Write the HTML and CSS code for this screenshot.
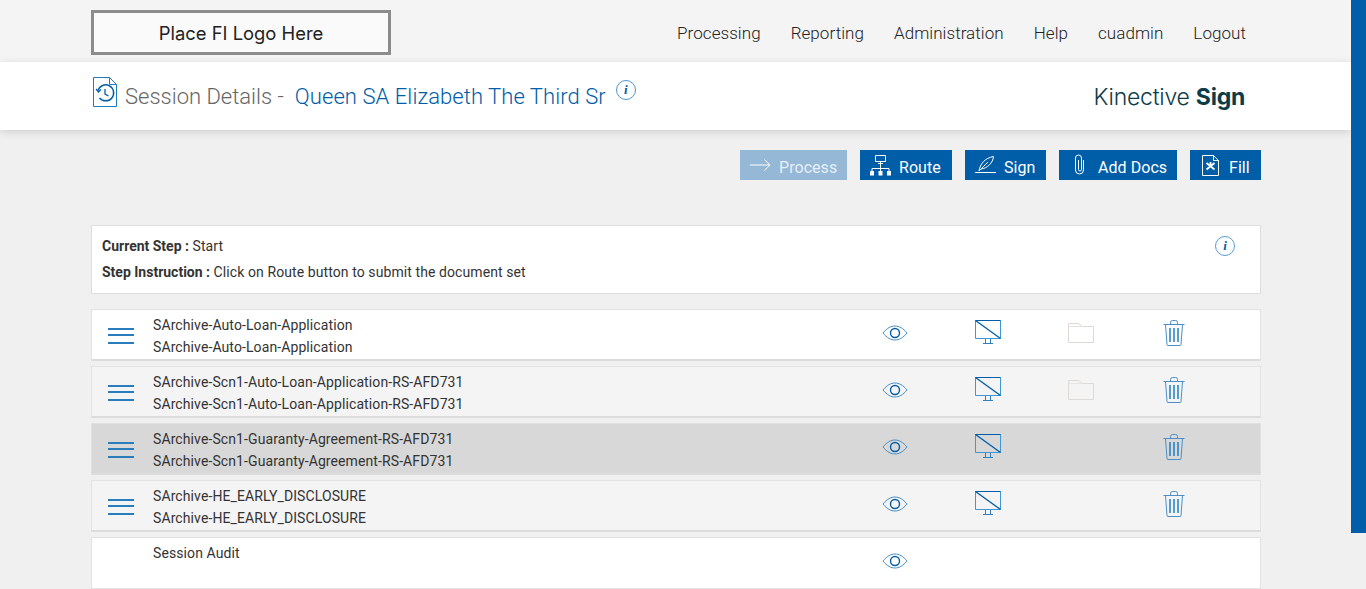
FILE: index.html
```html
<!DOCTYPE html>
<html lang="en">
<head>
<meta charset="utf-8">
<title>Session Details</title>
<link rel="stylesheet" href="styles.css">
</head>
<body>
<svg class="defs" width="0" height="0" aria-hidden="true">
  <symbol id="i-eye" viewBox="0 0 26 16"><path d="M1 8C5 3 9 1 13 1s8 2 12 7c-4 5-8 7-12 7S5 13 1 8z" fill="none" stroke="#4b8fc6" stroke-width="1"/><circle cx="13" cy="8" r="4.5" fill="none" stroke="#005da8" stroke-width="1.4"/></symbol>
  <symbol id="i-mon" viewBox="0 0 26 24"><path d="M.5 .5h25v18H.5z" fill="none" stroke="#3f97d3" stroke-width="1"/><path d="M.5 .5L25.5 18.5" stroke="#005da8" stroke-width="1.3"/><path d="M.5 .5h25" stroke="#005da8" stroke-width="1"/><path d="M10.5 19v4M15.5 19v4M8 23.500h10" stroke="#2f80bd" stroke-width="1" fill="none"/></symbol>
  <symbol id="i-folder" viewBox="0 0 26 20"><path d="M.5 19.500V.5h10l4 3h11v16z" fill="none" stroke="#dcd9d6" stroke-width="1"/><path d="M.5 3.500h14" stroke="#e6e3e0" stroke-width="1"/></symbol>
  <symbol id="i-trash" viewBox="0 0 22 26"><path d="M.5 4.500h21M7.500 4.500V2.500q0-2 2-2h3q2 0 2 2v2" fill="none" stroke="#4b8fc6" stroke-width="1"/><path d="M2.500 4.500l1.500 20q0 1 1 1h12q1 0 1-1l1.500-20" fill="none" stroke="#4b8fc6" stroke-width="1"/><path d="M7 8v14M11 8v14M15 8v14" stroke="#0f78c4" stroke-width="1.400"/></symbol>
</svg>

<header class="topbar">
  <div class="container topbar-in">
    <div class="logo">Place FI Logo Here</div>
    <nav class="nav">
      <a>Processing</a><a>Reporting</a><a>Administration</a><a>Help</a><a>cuadmin</a><a>Logout</a>
    </nav>
  </div>
</header>

<section class="titlebar">
  <div class="container titlebar-in">
    <div class="title">
      <svg class="title-icon" viewBox="0 0 24 30" width="24" height="30"><path d="M.5 .5h16l7 7v22H.5z" fill="none" stroke="#1c7cc2" stroke-width="1"/><path d="M16.500 .5v7h7" fill="none" stroke="#1c7cc2" stroke-width="1"/><path d="M5 13.500A8 8 0 1 1 6.500 21" fill="none" stroke="#005da8" stroke-width="1.500"/><path d="M3 12l2.500 3 2.500-2.500" fill="none" stroke="#005da8" stroke-width="1.200"/><path d="M12 12v5l3.500 2" fill="none" stroke="#005da8" stroke-width="1.300"/></svg>
      <span class="title-label">Session Details -</span>
      <span class="title-name">Queen SA Elizabeth The Third Sr</span>
      <span class="info info-title">i</span>
    </div>
    <div class="brand">Kinective <b>Sign</b></div>
  </div>
</section>

<main class="container">
  <div class="actions">
    <a class="btn btn-off"><svg width="21" height="12" viewBox="0 0 21 12"><path d="M0 6h20M14.500 .5L20 6l-5.500 5.500" fill="none" stroke="#fff" stroke-width="1"/></svg><span class="btn-label">Process</span></a>
    <a class="btn btn-route"><svg width="21" height="21" viewBox="0 0 21 21"><path d="M5.500 .5h10v6h-10zM8 8.500h5M10.500 7v9M2 16v-2.500h17V16" fill="none" stroke="#fff" stroke-width="1"/><path d="M0 16h4v4.500H0zM8.500 16h4v4.500h-4zM17 16h4v4.500h-4z" fill="#fff"/></svg><span class="btn-label">Route</span></a>
    <a class="btn btn-sign"><svg class="ic-sign" width="21" height="17" viewBox="0 0 21 17"><path d="M0 16.500h21" stroke="#fff" stroke-width="1"/><path d="M4 15C5 8 10 2 18.500 .5 18 7 12 12.500 6 13L4 15zM6 13L13 6" fill="none" stroke="#fff" stroke-width="1"/></svg><span class="btn-label">Sign</span></a>
    <a class="btn btn-docs"><svg class="ic-clip" width="9" height="21" viewBox="0 0 9 21"><path d="M3.500 6V15.500a1.500 1.500 0 0 0 3 0V4a3 3 0 0 0-6 0V16a4 4 0 0 0 8 0V6" fill="none" stroke="#fff" stroke-width="1"/></svg><span class="btn-label">Add Docs</span></a>
    <a class="btn btn-fill"><svg width="17" height="21" viewBox="0 0 17 21"><path d="M.5 .5h11l5 5v15H.5z" fill="none" stroke="#fff" stroke-width="1"/><path d="M11.500 .5v5h5" fill="none" stroke="#fff" stroke-width="1"/><path d="M4.500 8l8 6.500M12.500 8l-8 6.500M8.500 7v5" stroke="#fff" stroke-width="1.800"/></svg><span class="btn-label">Fill</span></a>
  </div>

  <section class="step">
    <div class="step-text">
      <p><b>Current Step :</b> Start</p>
      <p><b>Step Instruction :</b> Click on Route button to submit the document set</p>
    </div>
    <span class="info info-step">i</span>
  </section>

  <div class="rows">
    <article class="row row-white">
      <div class="col-menu"><span class="burger"></span></div>
      <div class="col-name"><p>SArchive-Auto-Loan-Application</p><p>SArchive-Auto-Loan-Application</p></div>
      <div class="col-ic"><svg class="ic-eye"><use href="#i-eye"/></svg></div>
      <div class="col-ic"><svg class="ic-mon"><use href="#i-mon"/></svg></div>
      <div class="col-ic"><svg class="ic-folder"><use href="#i-folder"/></svg></div>
      <div class="col-ic"><svg class="ic-trash"><use href="#i-trash"/></svg></div>
    </article>
    <article class="row row-grey">
      <div class="col-menu"><span class="burger"></span></div>
      <div class="col-name"><p>SArchive-Scn1-Auto-Loan-Application-RS-AFD731</p><p>SArchive-Scn1-Auto-Loan-Application-RS-AFD731</p></div>
      <div class="col-ic"><svg class="ic-eye"><use href="#i-eye"/></svg></div>
      <div class="col-ic"><svg class="ic-mon"><use href="#i-mon"/></svg></div>
      <div class="col-ic"><svg class="ic-folder"><use href="#i-folder"/></svg></div>
      <div class="col-ic"><svg class="ic-trash"><use href="#i-trash"/></svg></div>
    </article>
    <article class="row row-active">
      <div class="col-menu"><span class="burger"></span></div>
      <div class="col-name"><p>SArchive-Scn1-Guaranty-Agreement-RS-AFD731</p><p>SArchive-Scn1-Guaranty-Agreement-RS-AFD731</p></div>
      <div class="col-ic"><svg class="ic-eye"><use href="#i-eye"/></svg></div>
      <div class="col-ic"><svg class="ic-mon"><use href="#i-mon"/></svg></div>
      <div class="col-ic"></div>
      <div class="col-ic"><svg class="ic-trash"><use href="#i-trash"/></svg></div>
    </article>
    <article class="row row-grey">
      <div class="col-menu"><span class="burger"></span></div>
      <div class="col-name"><p>SArchive-HE_EARLY_DISCLOSURE</p><p>SArchive-HE_EARLY_DISCLOSURE</p></div>
      <div class="col-ic"><svg class="ic-eye"><use href="#i-eye"/></svg></div>
      <div class="col-ic"><svg class="ic-mon"><use href="#i-mon"/></svg></div>
      <div class="col-ic"></div>
      <div class="col-ic"><svg class="ic-trash"><use href="#i-trash"/></svg></div>
    </article>
    <article class="row row-white row-audit">
      <div class="col-menu"></div>
      <div class="col-name"><p>Session Audit</p></div>
      <div class="col-ic"><svg class="ic-eye"><use href="#i-eye"/></svg></div>
      <div class="col-ic"></div>
      <div class="col-ic"></div>
      <div class="col-ic"></div>
    </article>
  </div>
</main>

<div class="scroll-thumb"></div>
</body>
</html>
```

FILE: styles.css
```css
* { box-sizing: border-box; }
html, body { margin: 0; height: 589px; overflow: hidden; }
body {
  background: #f0f0f0;
  font-family: Roboto, "Liberation Sans", sans-serif;
  color: #333;
  width: 1351px;
  position: relative;
}
.defs { position: absolute; }
p { margin: 0; }
.container { width: 1170px; margin-left: 91px; }

.topbar { background: #f4f4f4; height: 62px; }
.topbar-in { display: flex; justify-content: space-between; padding-top: 10px; }
.logo {
  width: 300px; height: 45px;
  border: 3px solid #8c8c8c;
  background: #fafafa;
  display: flex; align-items: center; justify-content: center;
  font: 400 18.4px Inter, Lato, sans-serif;
  color: #222;
}
.nav { display: flex; gap: 30px; padding: 13px 15px 0 0; font-size: 17px; font-weight: 300; color: #222; line-height: 20px; letter-spacing: .06px; }

.titlebar { background: #fff; height: 68px; box-shadow: 0 2px 8px rgba(0,0,0,.14); position: relative; }
.titlebar-in { display: flex; justify-content: space-between; }
.title { display: flex; align-items: flex-start; padding-top: 16px; font-size: 22px; font-weight: 300; line-height: 38px; }
.title-icon { margin: -1px 8px 0 2px; flex: none; }
.title-label { color: #666; margin-right: 11px; }
.title-name { color: #005da8; letter-spacing: .07px; }
.info {
  display: inline-flex; align-items: center; justify-content: center;
  width: 20px; height: 20px; border-radius: 50%;
  border: 1px solid #4b96cf; color: #005da8;
  font: italic 700 13px "Liberation Serif", serif;
}
.info-title { margin: 2px 0 0 10px; }
.brand { font: 300 23px Inter, Lato, sans-serif; color: #0c3c47; padding: 20px 16px 0 0; line-height: 30px; letter-spacing: -.24px; }
.brand b { font-weight: 700; }

.actions { display: flex; justify-content: flex-end; gap: 13px; padding-top: 20px; height: 95px; }
.btn {
  height: 30px; background: #005da8; color: #fff;
  display: flex; align-items: center; font-size: 16px; padding: 0 10px; white-space: nowrap;
}
.btn svg { flex: none; }
.btn-label { margin-top: 5px; letter-spacing: .05px; }
.btn-off { background: #94b8d6; color: #e8eff6; width: 107px; }
.btn-off svg { margin-right: 8px; }
.btn-route { width: 92px; }
.btn-route svg { margin-right: 8px; }
.btn-sign { width: 81px; }
.btn-sign svg { margin-right: 8px; }
.btn .ic-sign { margin-bottom: 2px; }
.btn-docs { width: 118px; padding-left: 16px; }
.btn-docs svg { margin-right: 14px; }
.btn .ic-clip { margin-bottom: 1px; }
.btn-fill { width: 71px; padding-left: 12px; }
.btn-fill svg { margin-right: 10px; }

.step {
  background: #fff; border: 1px solid #ddd; height: 69px;
  display: flex; justify-content: space-between;
  padding: 7px 15px 0 10px; font-size: 14px; line-height: 26px; color: #333; letter-spacing: .09px;
}
.step b { letter-spacing: 0; }
.info-step { margin: 3px 10px 0 0; border-color: #5a9bd0; letter-spacing: 0; }

.rows { display: flex; flex-direction: column; gap: 5px; margin-top: 15px; }
.row {
  height: 52px; border: 1px solid #e2e2e2; border-bottom: 2px solid #dcdcdc;
  display: flex; font-size: 14px; line-height: 22px; color: #333; letter-spacing: .1px;
}
.row-white { background: #fff; }
.row-grey { background: #f4f4f4; }
.row-active { background: #d8d8d8; border-color: #e0e0e0; border-bottom-color: #dcdcdc; }
.row-audit { border-bottom: 1px solid #e2e2e2; }
.col-menu { width: 61px; flex: none; padding: 18px 0 0 16px; }
.burger { display: block; width: 26px; height: 16px; border-top: 2px solid #2a7dbd; border-bottom: 2px solid #2a7dbd; position: relative; }
.burger::after { content: ""; position: absolute; left: 0; right: 0; top: 4px; border-top: 2px solid #2a7dbd; }
.col-name { width: 695px; flex: none; padding-top: 4px; }
.col-ic { width: 93px; flex: none; padding-top: 10px; display: flex; justify-content: center; align-items: flex-start; }
.ic-eye { width: 26px; height: 16px; margin-top: 5px; }
.ic-mon { width: 26px; height: 24px; }
.ic-folder { width: 26px; height: 20px; margin-top: 3px; }
.ic-trash { width: 22px; height: 26px; }

.scroll-thumb { position: fixed; left: 1351px; top: 0; width: 15px; height: 533px; background: #005da8; }
```
